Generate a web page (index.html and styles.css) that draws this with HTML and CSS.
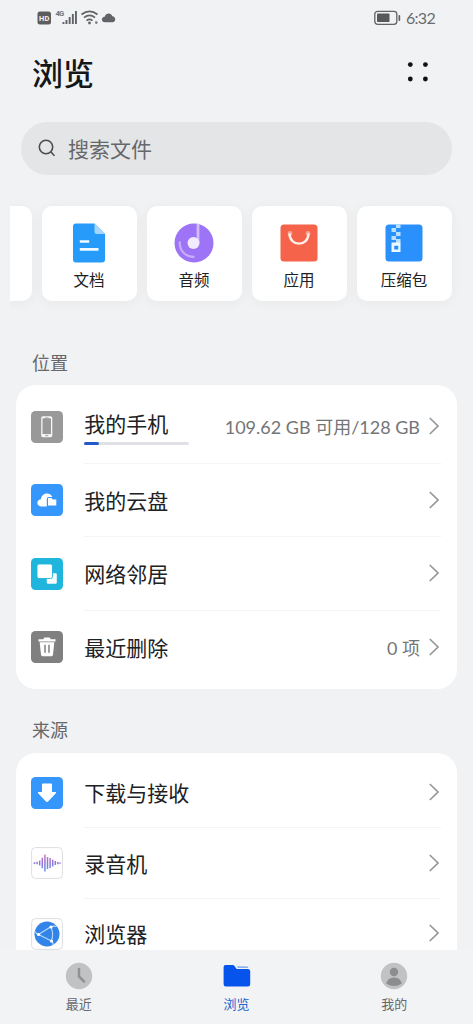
FILE: index.html
```html
<!DOCTYPE html>
<html lang="zh-CN">
<head>
<meta charset="utf-8">
<meta name="viewport" content="width=device-width, initial-scale=1">
<title>浏览</title>
<link rel="stylesheet" href="styles.css">
</head>
<body>
<svg class="defs" width="0" height="0" aria-hidden="true">
  <symbol id="chevron" viewBox="0 0 12 18"><path d="M1.800 1 10 9l-8.200 8" fill="none" stroke="#969798" stroke-width="1.700"/></symbol>
</svg>
<div class="screen">
  <header class="status">
    <div class="status-left">
      <svg width="80" height="18" viewBox="0 0 80 18">
        <rect x="0.500" y="3.500" width="13.500" height="13" rx="2.500" fill="#5c5d5f"/>
        <text x="7.200" y="13" class="hd" text-anchor="middle">HD</text>
        <text x="18.500" y="7.800" class="gen">4G</text>
        <g fill="#626366"><rect x="25.500" y="14" width="1.900" height="2"/><rect x="28.500" y="12" width="1.900" height="4"/><rect x="31.700" y="9" width="1.900" height="7"/><rect x="34.900" y="6" width="1.900" height="10"/><rect x="38" y="3" width="1.900" height="13"/></g>
        <g fill="none" stroke="#626366" stroke-width="1.700"><path d="M44.500 6.500q8.200-6.400 16 0"/><path d="M47 9.700q5.600-4.500 11 0"/><path d="M49.500 12.600q3.100-2.400 6 0"/></g>
        <circle cx="52.500" cy="15" r="1.400" fill="#626366"/><circle cx="59.300" cy="14.600" r="1.300" fill="#77787a"/>
        <path d="M68 14.200c-4 0-4.200-5.100-.3-5.500 1.300-4.300 6.500-4.200 7.600-.5 3.800.2 3.900 6 .2 6z" fill="#626366"/>
      </svg>
    </div>
    <div class="status-right">
      <svg width="27" height="16" viewBox="0 0 27 16">
        <rect x="0.800" y="1.300" width="22" height="13" rx="2.800" fill="none" stroke="#626366" stroke-width="1.300"/>
        <rect x="3" y="3.500" width="12.500" height="8.600" rx=".8" fill="#58595b"/>
        <rect x="24.500" y="5" width="1.700" height="6" rx=".8" fill="#626366"/>
      </svg>
      <span class="clock">6:32</span>
    </div>
  </header>

  <div class="heading">
    <h1>浏览</h1>
    <svg width="24" height="22" viewBox="0 0 24 22" fill="#111"><circle cx="4.300" cy="2.600" r="2.400"/><circle cx="19.400" cy="2.600" r="2.400"/><circle cx="4.300" cy="17" r="2.400"/><circle cx="19.400" cy="17" r="2.400"/></svg>
  </div>

  <div class="search">
    <svg width="18" height="18" viewBox="0 0 18 18" fill="none" stroke="#4b4c4e" stroke-width="1.600"><circle cx="8" cy="8" r="6.700"/><path d="m12.700 12.800 3.800 3.900"/></svg>
    <span>搜索文件</span>
  </div>

  <div class="tiles">
    <div class="tile"></div>
    <div class="tile">
      <svg width="40" height="40" viewBox="0 0 40 40"><path d="M7 .5h18.500L36 11v25.500a3 3 0 0 1-3 3H7a3 3 0 0 1-3-3v-33a3 3 0 0 1 3-3z" fill="#279bfa"/><path d="M25.500.5 36 11h-8.500a2 2 0 0 1-2-2z" fill="#a6d6fd"/><path d="M10.800 18.500h9.400M10.800 26.400h18.700" stroke="#eefaff" stroke-width="2.600"/></svg>
      <span>文档</span>
    </div>
    <div class="tile">
      <svg width="40" height="40" viewBox="0 0 40 40"><circle cx="20" cy="20" r="19.500" fill="#9c74f5"/><path d="M5.800 18.500C5.200 28 11.500 34 20.500 33.900" fill="none" stroke="#c8adfc" stroke-width="2.200"/><path d="M24 .9V20" stroke="#d2bdfc" stroke-width="2.800"/><circle cx="19.500" cy="20" r="6" fill="#f2eaff"/></svg>
      <span>音频</span>
    </div>
    <div class="tile">
      <svg width="40" height="40" viewBox="0 0 40 40"><rect x="1.500" y="1.500" width="37" height="37" rx="3.500" fill="#f4634a"/><circle cx="11" cy="10.500" r="2.400" fill="#f9a491"/><circle cx="29" cy="10.500" r="2.400" fill="#f9a491"/><path d="M10.500 10.500c0 13.500 19 13.500 19 0" fill="none" stroke="#fff0e9" stroke-width="2.400"/></svg>
      <span>应用</span>
    </div>
    <div class="tile">
      <svg width="40" height="40" viewBox="0 0 40 40"><rect x="1.500" y="1.500" width="37" height="37" rx="3.500" fill="#2a91fc"/><path d="M12 1.500h4.500V5H12zM7.500 5H12v4H7.500zM12 9h4.500v4H12zM7.500 13H12v4H7.500zM12 16h4.500v4H12z" fill="#b8e0ff"/><path d="M7.500 19.500h9v9.500h-9zm2.700 3.200v3.800h4.100v-3.800z" fill="#ecf9ff" fill-rule="evenodd"/></svg>
      <span>压缩包</span>
    </div>
  </div>

  <h2 class="section">位置</h2>
  <section class="card places">
    <div class="row">
      <svg class="icon" viewBox="0 0 32 32"><rect width="32" height="32" rx="4.500" fill="#999"/><path d="M12 5.300h7.500a1.800 1.800 0 0 1 1.800 1.800v17.400a1.800 1.800 0 0 1-1.800 1.800H12a1.800 1.800 0 0 1-1.800-1.800V7.100A1.800 1.800 0 0 1 12 5.300z" fill="#f8f8f8"/><path d="M11.500 7.300h8.500v15.800h-8.500z" fill="#999"/><path d="M14 7h3.500M14.300 24.700h3" stroke="#999"/></svg>
      <div class="body">
        <div class="storage"><span class="label">我的手机</span><div class="bar"><i></i></div></div>
        <span class="value capacity">109.62 GB 可用/128 GB</span>
        <svg class="chevron"><use href="#chevron"/></svg>
      </div>
    </div>
    <div class="row">
      <svg class="icon" viewBox="0 0 32 32"><rect width="32" height="32" rx="4.500" fill="#3597fb"/><path d="M15.800 22.500H10c-4.900-.3-4.700-6.800-.2-7.200C10.800 8.600 19 7.600 21.300 13h-3.800q-1.700 0-1.700 1.700z" fill="#fff"/><path d="M17 14h3.400l1.500 1.600h3.400v6H17z" fill="#fff"/></svg>
      <div class="body"><span class="label">我的云盘</span><svg class="chevron"><use href="#chevron"/></svg></div>
    </div>
    <div class="row">
      <svg class="icon" viewBox="0 0 32 32"><rect width="32" height="32" rx="4.500" fill="#1fb5dd"/><rect x="15.800" y="15.200" width="10" height="10.500" rx="1.300" fill="#f7fdff"/><rect x="6" y="6" width="15.500" height="14.500" rx="2" fill="#fff" stroke="#1fb5dd" stroke-width=".9"/></svg>
      <div class="body"><span class="label">网络邻居</span><svg class="chevron"><use href="#chevron"/></svg></div>
    </div>
    <div class="row">
      <svg class="icon" viewBox="0 0 32 32"><rect width="32" height="32" rx="4.500" fill="#808080"/><path d="M7.500 8.300h4.800l1-1.700h5.400l1 1.700h4.800v2.300h-17zM8.700 11.300h14.600l-1.300 12.500q-.2 1.400-1.600 1.400h-8.800q-1.400 0-1.600-1.400z" fill="#fff"/><path d="M14 13.700v8M18 13.700v8" stroke="#808080" stroke-width="1.500"/></svg>
      <div class="body"><span class="label">最近删除</span><span class="value">0 项</span><svg class="chevron"><use href="#chevron"/></svg></div>
    </div>
  </section>

  <h2 class="section">来源</h2>
  <section class="card sources">
    <div class="row">
      <svg class="icon" viewBox="0 0 32 32"><rect width="32" height="32" rx="4.500" fill="#3597fb"/><path d="M12 6.500h8q1 0 1 1V15h3.500q1.200.2.400 1.300l-7.600 8q-1.300 1.200-2.600 0l-7.600-8Q6.300 15.200 7.500 15H11V7.500q0-1 1-1z" fill="#fff"/></svg>
      <div class="body"><span class="label">下载与接收</span><svg class="chevron"><use href="#chevron"/></svg></div>
    </div>
    <div class="row">
      <svg class="icon" viewBox="0 0 32 32"><defs><linearGradient id="wave" gradientUnits="userSpaceOnUse" x1="0" y1="7" x2="0" y2="25"><stop stop-color="#ce77b5"/><stop offset=".5" stop-color="#9075d6"/><stop offset="1" stop-color="#5c9bea"/></linearGradient></defs><rect x=".6" y=".6" width="30.800" height="30.800" rx="4" fill="#fff" stroke="#dedee2"/><path d="M3.500 15.300v1.600M6.100 14.800v2.500M8.700 13.500v5.100M11.300 10.700v10.500M13.900 7.500v17M16.500 10v12M19.100 11v10M21.700 12.700v6.700M24.300 14v4.100M26.900 14.900v2.300M29 15.400v1.300" stroke="url(#wave)" stroke-width="1.500"/></svg>
      <div class="body"><span class="label">录音机</span><svg class="chevron"><use href="#chevron"/></svg></div>
    </div>
    <div class="row">
      <svg class="icon" viewBox="0 0 32 32"><rect x=".6" y=".6" width="30.800" height="30.800" rx="4" fill="#fff" stroke="#dedee2"/><circle cx="16" cy="16" r="12.500" fill="#3284e8"/><path d="M7.500 16.500 19.500 9M7.500 16.500 20.500 23M20 9q3 7 .5 14M19.500 9q4-1.500 6-.5M7.500 16.500q-2-.5-3.500-3M20.500 23q2 2 1.500 4" fill="none" stroke="#b9dcff" stroke-width="1.100"/><g fill="#fff"><circle cx="7.500" cy="16.500" r="1.600"/><circle cx="20" cy="9" r="1.600"/><circle cx="20.500" cy="23" r="1.600"/></g></svg>
      <div class="body"><span class="label">浏览器</span><svg class="chevron"><use href="#chevron"/></svg></div>
    </div>
  </section>

  <nav class="tabs">
    <div class="tab"><svg width="28" height="28" viewBox="0 0 28 28"><circle cx="14" cy="14" r="13.200" fill="#c1c2c4"/><path d="M14 7v7.500l5 5" fill="none" stroke="#909194" stroke-width="2.500" stroke-linecap="round"/></svg><span>最近</span></div>
    <div class="tab active"><svg width="28" height="28" viewBox="0 0 28 28"><path d="M2.500 3h7.200q1 0 1.600.8l2.400 3.100h11q2.500 0 2.500 2.500v12.800q0 2.300-2.300 2.300H2.800Q.6 24.500.6 22.200V5.200Q.6 3 2.500 3z" fill="#0754ed"/><path d="M14 4.600h9.500q1.500 0 2 1.200H14.800z" fill="#6798f0"/></svg><span>浏览</span></div>
    <div class="tab"><svg width="28" height="28" viewBox="0 0 28 28"><circle cx="14" cy="14" r="13.200" fill="#c1c2c4"/><circle cx="14" cy="10" r="4.200" fill="#8c8d8f"/><path d="M6.200 21.500q1.500-6 7.800-6t7.800 6Q14 26.500 6.200 21.500z" fill="#8c8d8f"/></svg><span>我的</span></div>
  </nav>
</div>
</body>
</html>
```

FILE: styles.css
```css
* { box-sizing: border-box; }
body {
  margin: 0;
  background: #f1f2f4;
  font-family: Lato, "Noto Sans CJK SC", sans-serif;
  color: #202123;
}
svg { display: block; flex: none; }
.defs { position: absolute; }
h1, h2 { margin: 0; }
.screen { width: 473px; height: 1024px; display: flex; flex-direction: column; overflow: hidden; }
.status { height: 36px; flex: none; display: flex; justify-content: space-between; padding: 8px 38px 0 37px; }
.status-right { display: flex; gap: 5px; padding-top: 2px; }
.clock { font-size: 16px; line-height: 16px; letter-spacing: -0.7px; color: #6b6c6e; }
.hd { font: bold 7.500px Roboto, sans-serif; fill: #f1f2f4; }
.gen { font: bold 7.500px Roboto, sans-serif; fill: #737476; letter-spacing: -0.8px; }
.heading { height: 74px; flex: none; display: flex; align-items: center; justify-content: space-between; padding: 0 43px 0 32px; }
.heading h1 { font-size: 31px; font-weight: 500; line-height: 40px; color: #151617; }
.search { height: 53px; flex: none; margin: 12px 21px 0; padding: 0 0 2px 17px; border-radius: 27px; background: #e4e5e7; display: flex; align-items: center; gap: 12px; font-size: 21px; color: #66676a; }
.tiles { flex: none; height: 135px; margin: 11px 0 0 10px; padding: 20px 21px 20px 0; display: flex; justify-content: flex-end; gap: 10px; overflow: hidden; }
.tile { width: 95px; height: 95px; flex: none; border-radius: 10px; background: #fff; box-shadow: 0 2px 12px rgba(40, 50, 65, .05); display: flex; flex-direction: column; align-items: center; gap: 6px; padding: 17px 1px 0 0; font-size: 15.500px; line-height: 22px; }
.section { flex: none; height: 64px; padding: 32px 32px 0; font-size: 18px; font-weight: 400; line-height: 20px; color: #66676a; }
.card { flex: none; margin: 0 16px; padding: 5px 16px 5px 15.300px; border-radius: 20px; background: #fff; }
.row { display: flex; align-items: center; gap: 21px; }
.places .row { height: 73.500px; }
.sources .row { height: 70.500px; }
.icon { width: 32px; height: 32px; }
.body { flex: 1; height: 100%; display: flex; align-items: center; gap: 8px; border-bottom: 1px solid #f4f4f5; }
.row:last-child .body { border-bottom-color: transparent; }
.label { flex: 1; font-size: 21px; line-height: 28px; padding-top: 2px; }
.storage { flex: 1; display: flex; flex-direction: column; }
.storage .label { flex: none; }
.bar { width: 105px; height: 3px; margin-top: 4px; border-radius: 2px; background: #e0e1e5; }
.bar i { display: block; width: 15px; height: 3px; border-radius: 2px; background: #2359c8; }
.value { font-size: 18px; line-height: 24px; padding-top: 2px; color: #747577; white-space: nowrap; }
.chevron { width: 12px; height: 18px; margin-right: 1px; }
.tabs { flex: none; height: 74px; margin-top: auto; display: flex; background: #f1f3f5; }
.sources { flex: 0 0 197px; height: 197px; padding-bottom: 0; border-radius: 20px 20px 0 0; overflow: hidden; }
.places + .section { height: 63.500px; padding-top: 31px; }
.tab { flex: 1; display: flex; flex-direction: column; align-items: center; padding-top: 12px; gap: 5px; font-size: 13px; line-height: 18px; color: #66676a; }
.tab.active { color: #2562cc; }
```
